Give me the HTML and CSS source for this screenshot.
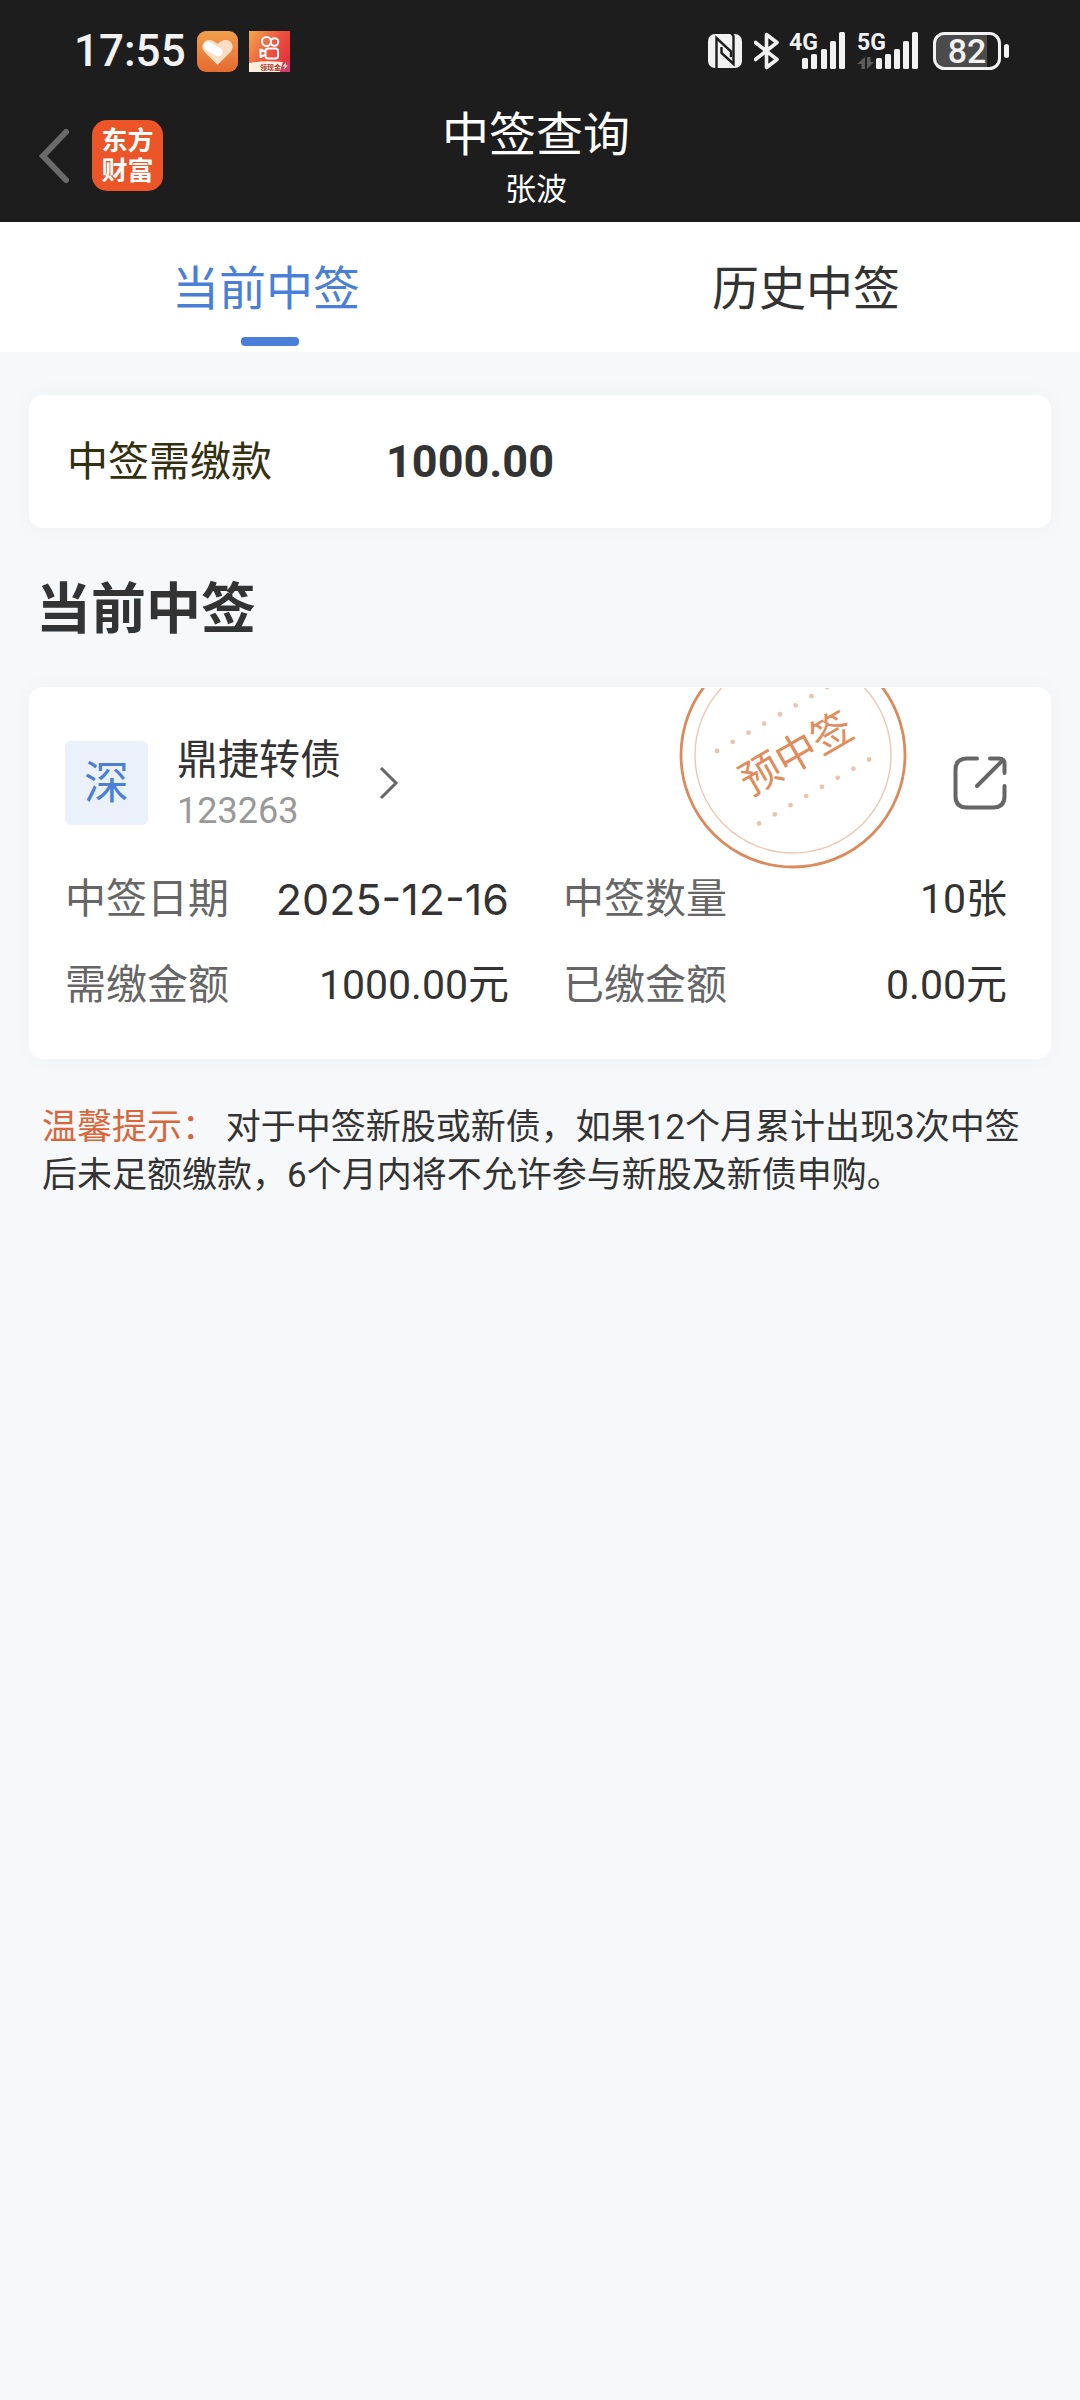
FILE: index.html
```html
<!DOCTYPE html>
<html lang="zh-CN">
<head>
  <meta charset="UTF-8" />
  <meta name="viewport" content="width=device-width, initial-scale=1" />
  <title>中签查询</title>
  <link rel="stylesheet" href="styles.css">
</head>
<body>
  <div class="status-bar">
    <div class="status-left">
      <span class="clock">17:55</span>
      <svg class="app-icon" viewBox="0 0 41 41">
        <defs>
          <linearGradient id="heartBg" x1="0" y1="0" x2="0" y2="1">
            <stop offset="0" stop-color="#f0a04c" />
            <stop offset="1" stop-color="#e56a30" />
          </linearGradient>
        </defs>
        <rect width="41" height="41" rx="9" fill="url(#heartBg)" />
        <path d="M20.500 34 L7.500 21 C2.500 15 7 9 12 9 C16 9 18 11 20.500 13 C23 11 25 9 29 9 C34 9 38.500 15 33.500 21 Z" fill="#fbdcc4" />
        <path d="M11 15 L21 21" stroke="#fff" stroke-width="9" stroke-linecap="round" />
      </svg>
      <svg class="app-icon" viewBox="0 0 41 41">
        <defs>
          <linearGradient id="videoBg" x1="0" y1="0" x2="1" y2="0.600">
            <stop offset="0" stop-color="#f3a94a" />
            <stop offset="0.600" stop-color="#ee5340" />
            <stop offset="1" stop-color="#e2363c" />
          </linearGradient>
        </defs>
        <rect width="41" height="41" fill="url(#videoBg)" />
        <g fill="none" stroke="#fff" stroke-width="2" stroke-linejoin="round">
          <circle cx="17.500" cy="10.500" r="4.500" />
          <circle cx="25.500" cy="11" r="3.800" />
          <rect x="16.500" y="17.500" width="12.500" height="10" rx="2.500" />
          <path d="M16 20.500 L11.500 18.500 V26 L16 24" />
        </g>
        <path d="M0 32 Q16 29 34 31 L31 41 H0 Z" fill="#fdeedd" />
        <path d="M34 31 H41 V41 H31 Z" fill="#d53a6e" />
        <text x="11" y="39" class="tiny-label">领现金</text>
        <path d="M37 31 L33.500 35.500 H36 L34.500 39 L39 34.500 H36.500 Z" fill="#ffe9a8" />
      </svg>
    </div>
    <div class="status-right">
      <svg width="34" height="40" viewBox="0 0 34 40">
        <rect x="0" y="3" width="34" height="34" rx="7" fill="#f2f2f2" />
        <path d="M8.500 38 V7 L23 20.500 V26" fill="none" stroke="#1d1d1d" stroke-width="2.400" />
        <path d="M23 2 L25.500 5 V33 L13.500 22 V16" fill="none" stroke="#1d1d1d" stroke-width="2.400" />
      </svg>
      <svg width="25" height="40" viewBox="0 0 25 40">
        <path d="M1.500 11.500 L23 28.500 L12.500 36.500 V3.500 L23 11.500 L1.500 28.500" fill="none" stroke="#f2f2f2" stroke-width="3.600" stroke-linejoin="round" stroke-linecap="round" />
      </svg>
      <svg class="signal" width="56" height="40" viewBox="0 0 56 40">
        <text x="-2" y="19">4G</text>
        <g fill="#f2f2f2">
          <rect x="11" y="27" width="6" height="11" rx="1.500" />
          <rect x="20" y="23" width="6" height="15" rx="1.500" />
          <rect x="30" y="18" width="6" height="20" rx="1.500" />
          <rect x="39" y="10" width="6" height="28" rx="1.500" />
          <rect x="48" y="1" width="6" height="37" rx="1.500" />
        </g>
      </svg>
      <svg class="signal" width="62" height="40" viewBox="0 0 62 40">
        <text x="-2" y="19">5G</text>
        <path d="M6 38 H2.500 V33 H-2 L6 26 Z M8 26 V38 L15 31 H11.500 V26 Z" fill="#5c5c5c" />
        <g fill="#f2f2f2">
          <rect x="17" y="27" width="6" height="11" rx="1.500" />
          <rect x="26" y="23" width="6" height="15" rx="1.500" />
          <rect x="35" y="18" width="6" height="20" rx="1.500" />
          <rect x="44" y="10" width="6" height="28" rx="1.500" />
          <rect x="53" y="1" width="6" height="37" rx="1.500" />
        </g>
      </svg>
      <svg class="battery" width="76" height="40" viewBox="0 0 76 40">
        <path d="M9 4 H54 V36 H9 Q3 36 3 30 V10 Q3 4 9 4 Z" fill="#4b4b4b" />
        <rect x="1.500" y="2.500" width="65" height="35" rx="10" fill="none" stroke="#f2f2f2" stroke-width="3" />
        <rect x="71" y="13" width="5" height="14" rx="2.500" fill="#f2f2f2" />
        <text x="34" y="32" text-anchor="middle">82</text>
      </svg>
    </div>
  </div>

  <header>
    <div class="header-left">
      <button class="back-btn" aria-label="返回">
        <svg width="32" height="56" viewBox="0 0 32 56">
          <path d="M28 4 L5 28 L28 52" fill="none" stroke="#6a6a6a" stroke-width="6" stroke-linecap="round" />
        </svg>
      </button>
      <a class="logo" href="#">东方<br>财富</a>
    </div>
    <div class="header-title">
      <h1>中签查询</h1>
      <p>张波</p>
    </div>
  </header>

  <nav class="tabs">
    <a href="#" class="tab active">当前中签</a>
    <a href="#" class="tab">历史中签</a>
  </nav>

  <main>
    <section class="card pay-card">
      <span class="pay-label">中签需缴款</span>
      <strong class="pay-value">1000.00</strong>
    </section>

    <h2>当前中签</h2>

    <section class="card bond-card">
      <svg class="stamp" width="230" height="182" viewBox="0 48 230 182">
        <circle cx="115" cy="115" r="112" fill="none" stroke="#dc8a5c" stroke-width="2.800" />
        <circle cx="115" cy="115" r="98" fill="none" stroke="#ecc8b4" stroke-width="1.400" />
        <g fill="none" stroke="#ebc4b0" stroke-width="4.800" stroke-linecap="round" stroke-dasharray="0 18.200">
          <path d="M39 111 L150 46.500" />
          <path d="M81 183.500 L192 119" />
        </g>
        <text x="118" y="128" text-anchor="middle" transform="rotate(-30 118 113)">预中签</text>
      </svg>

      <div class="bond-head">
        <span class="market">深</span>
        <a class="bond-name" href="#">
          <span>
            <span class="name">鼎捷转债</span>
            <span class="code">123263</span>
          </span>
          <svg width="20" height="36" viewBox="0 0 20 36">
            <path d="M2 3 L17 18 L2 33" fill="none" stroke="#666" stroke-width="3" />
          </svg>
        </a>
        <button class="share-btn" aria-label="分享">
          <svg width="54" height="54" viewBox="0 0 54 54">
            <g fill="none" stroke="#666" stroke-width="4" stroke-linecap="round" stroke-linejoin="round">
              <path d="M24 2.500 H14 Q2.500 2.500 2.500 14 V40 Q2.500 51.500 14 51.500 H40 Q51.500 51.500 51.500 40 V30" />
              <path d="M37 2.500 H46 Q51.500 2.500 51.500 8 V17" />
              <path d="M24 30 L50 4" />
            </g>
          </svg>
        </button>
      </div>

      <dl class="info">
        <div><dt>中签日期</dt><dd class="date">2025-12-16</dd></div>
        <div><dt>中签数量</dt><dd>10张</dd></div>
        <div><dt>需缴金额</dt><dd>1000.00元</dd></div>
        <div><dt>已缴金额</dt><dd>0.00元</dd></div>
      </dl>
    </section>

    <p class="tips"><span>温馨提示：</span> 对于中签新股或新债，如果12个月累计出现3次中签后未足额缴款，6个月内将不允许参与新股及新债申购。</p>
  </main>
</body>
</html>
```
FILE: styles.css
```css
* {
  box-sizing: border-box;
}
body {
  font-family: Roboto, "Noto Sans CJK SC", sans-serif;
  margin: 0;
  background: #f7f8fa;
  color: #333;
}
h1, h2, p, dl, dd {
  margin: 0;
}
a {
  color: inherit;
  text-decoration: none;
}
button {
  background: none;
  border: none;
  padding: 0;
  cursor: pointer;
}
svg {
  display: block;
  flex-shrink: 0;
}

/* status bar */
.status-bar {
  display: flex;
  justify-content: space-between;
  align-items: center;
  height: 102px;
  padding: 0 71px 0 74px;
  background: #1d1d1d;
  color: #f2f2f2;
}
.status-left, .status-right {
  display: flex;
  align-items: center;
}
.status-left {
  gap: 11px;
}
.status-right {
  gap: 12px;
}
.clock {
  font-size: 44px;
  font-weight: 500;
  line-height: 48px;
}
.app-icon {
  width: 41px;
  height: 41px;
}
.tiny-label {
  font-size: 7px;
  font-weight: bold;
  fill: #b3392b;
}
.signal {
  overflow: visible;
}
.signal text {
  font-size: 23px;
  font-weight: bold;
  fill: #f2f2f2;
}
.battery text {
  font-size: 34px;
  font-weight: 500;
  fill: #f2f2f2;
}

/* title bar */
header {
  display: grid;
  grid-template-columns: 1fr auto 1fr;
  align-items: start;
  height: 120px;
  padding: 0 46px 0 38px;
  background: #1d1d1d;
  color: #fff;
}
.header-left {
  display: flex;
  align-items: center;
  gap: 22px;
  margin-top: 18px;
}
.logo {
  width: 71px;
  height: 71px;
  padding-top: 6px;
  border-radius: 15px;
  background: #eb5528;
  color: #fff;
  font-size: 26px;
  font-weight: bold;
  line-height: 30px;
  text-align: center;
}
.header-title {
  padding-top: 1px;
  text-align: center;
}
.header-title h1 {
  font-size: 47px;
  font-weight: normal;
  line-height: 64px;
}
.header-title p {
  font-size: 31px;
  line-height: 46px;
}

/* tabs */
.tabs {
  display: flex;
  background: #fff;
}
.tab {
  position: relative;
  flex: 1;
  padding: 4px 8px 0 0;
  font-size: 47px;
  line-height: 126px;
  text-align: center;
}
.tab.active {
  color: #4a7fd8;
}
.tab.active::after {
  content: "";
  position: absolute;
  left: 50%;
  bottom: 6px;
  width: 58px;
  height: 9px;
  margin-left: -29px;
  border-radius: 4px;
  background: #4a7fd8;
}

/* cards */
main {
  padding: 43px 29px;
}
.card {
  background: #fff;
  border-radius: 14px;
  box-shadow: 0 0 24px rgba(0, 0, 0, 0.03);
}
.pay-card {
  display: flex;
  align-items: center;
  gap: 114px;
  padding: 39px 38px 38px;
  line-height: 56px;
}
.pay-label {
  font-size: 41px;
  color: #333010;
}
.pay-value {
  font-size: 45px;
  font-weight: bold;
}
h2 {
  margin: 49px 0 46px 7px;
  font-size: 55px;
  line-height: 64px;
}
.bond-card {
  position: relative;
  padding: 46px 44px 46px 36px;
}
.stamp {
  position: absolute;
  top: 1px;
  right: 143px;
}
.stamp text {
  font-size: 41px;
  fill: #e08c5c;
}
.bond-head {
  display: flex;
  align-items: center;
}
.market {
  width: 83px;
  margin-right: 29px;
  padding-top: 2px;
  border-radius: 6px;
  background: #eaf1fb;
  color: #4a7fd8;
  font-size: 45px;
  line-height: 82px;
  text-align: center;
}
.bond-name {
  display: flex;
  align-items: center;
  gap: 38px;
}
.name, .code {
  display: block;
}
.name {
  padding-top: 2px;
  font-size: 41px;
  line-height: 50px;
}
.code {
  padding-top: 4px;
  font-size: 36px;
  line-height: 44px;
  color: #999;
}
.share-btn {
  margin-left: auto;
}
.info {
  display: grid;
  grid-template-columns: 1fr 1fr;
  gap: 30px 54px;
  margin-top: 38px;
  font-size: 41px;
  line-height: 56px;
}
.info div {
  display: flex;
  justify-content: space-between;
}
.info dt {
  color: #666;
}
.info .date {
  font-family: Inter, sans-serif;
  font-size: 43px;
}
.tips {
  padding: 45px 13px;
  font-size: 35px;
  line-height: 48px;
}
.tips span {
  color: #d9673a;
}
```
